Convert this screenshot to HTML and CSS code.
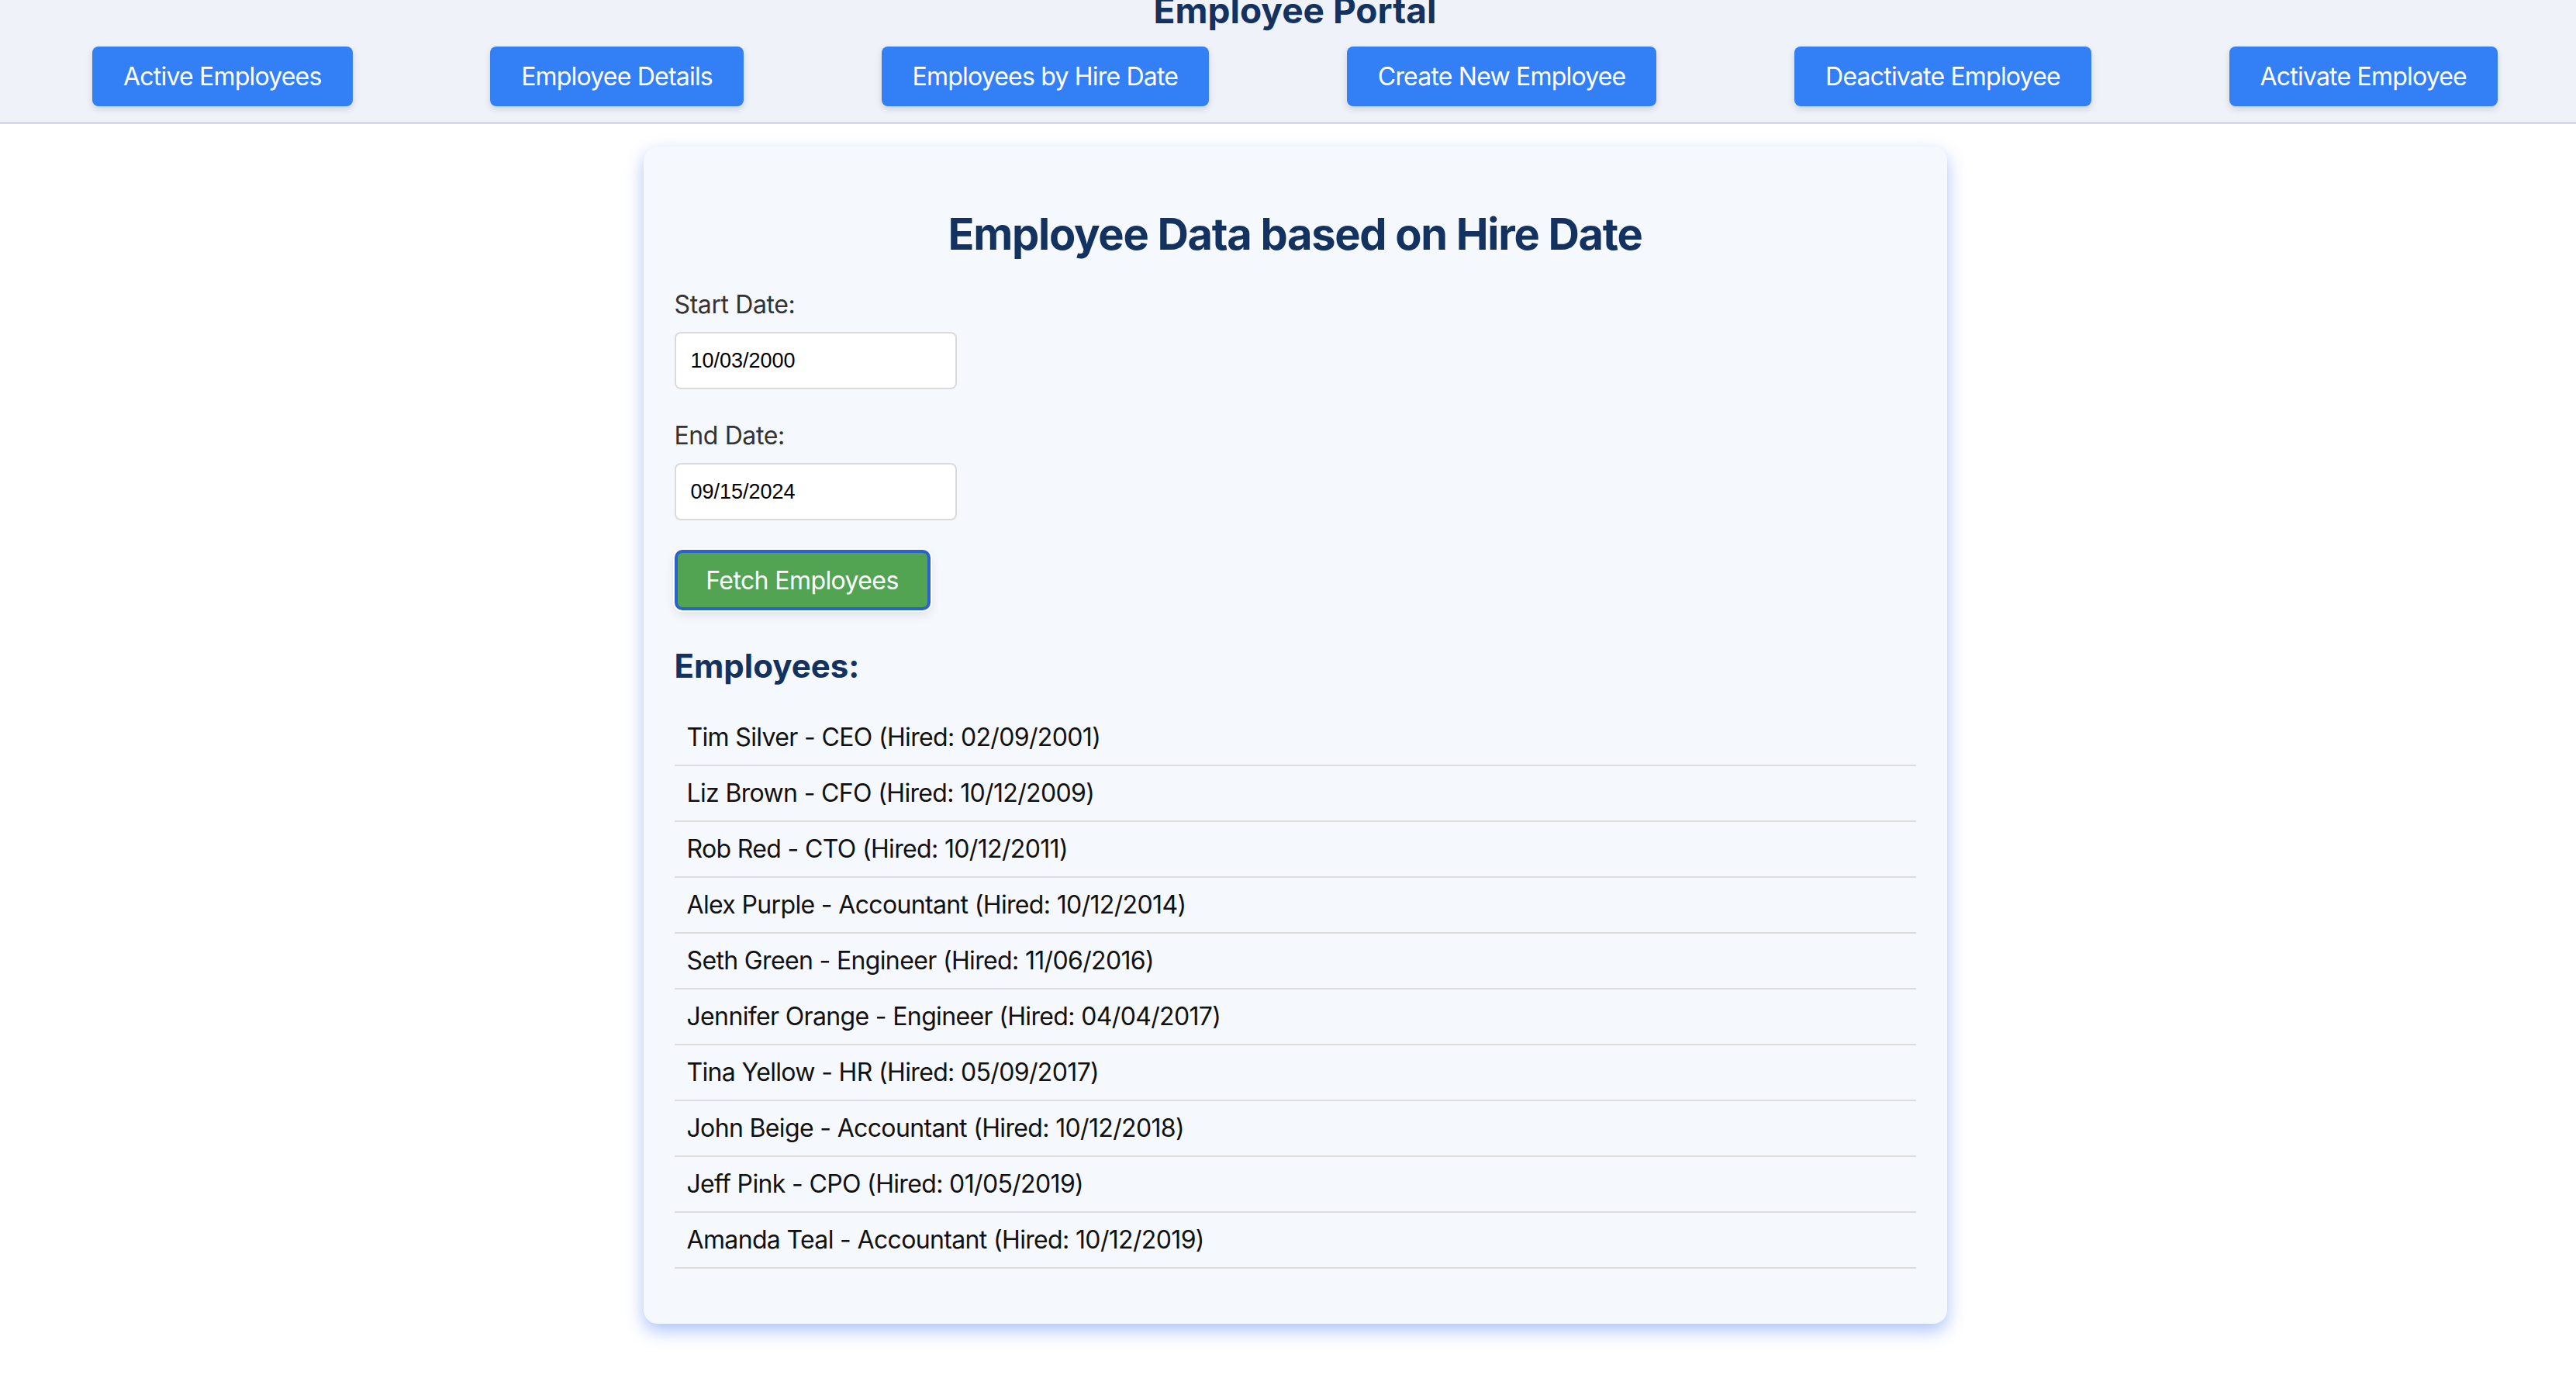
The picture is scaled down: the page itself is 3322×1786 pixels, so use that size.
FILE: index.html
```html
<!DOCTYPE html>
<html lang="en">
<head>
<meta charset="utf-8">
<title>Employee Portal</title>
<link rel="stylesheet" href="styles.css">
</head>
<body>
<header class="site-header">
  <h1 class="portal-title">Employee Portal</h1>
  <nav class="nav">
    <button class="nav-btn">Active Employees</button>
    <button class="nav-btn">Employee Details</button>
    <button class="nav-btn">Employees by Hire Date</button>
    <button class="nav-btn">Create New Employee</button>
    <button class="nav-btn">Deactivate Employee</button>
    <button class="nav-btn">Activate Employee</button>
  </nav>
</header>
<main class="main">
  <section class="card">
    <h2 class="card-title">Employee Data based on Hire Date</h2>
    <label class="field-label" for="start">Start Date:</label>
    <input class="date-input" id="start" type="text" value="10/03/2000">
    <label class="field-label" for="end">End Date:</label>
    <input class="date-input" id="end" type="text" value="09/15/2024">
    <button class="fetch-btn">Fetch Employees</button>
    <h3 class="list-title">Employees:</h3>
    <ul class="emp-list">
      <li class="emp-item">Tim Silver - CEO (Hired: 02/09/2001)</li>
      <li class="emp-item">Liz Brown - CFO (Hired: 10/12/2009)</li>
      <li class="emp-item">Rob Red - CTO (Hired: 10/12/2011)</li>
      <li class="emp-item">Alex Purple - Accountant (Hired: 10/12/2014)</li>
      <li class="emp-item">Seth Green - Engineer (Hired: 11/06/2016)</li>
      <li class="emp-item">Jennifer Orange - Engineer (Hired: 04/04/2017)</li>
      <li class="emp-item">Tina Yellow - HR (Hired: 05/09/2017)</li>
      <li class="emp-item">John Beige - Accountant (Hired: 10/12/2018)</li>
      <li class="emp-item">Jeff Pink - CPO (Hired: 01/05/2019)</li>
      <li class="emp-item">Amanda Teal - Accountant (Hired: 10/12/2019)</li>
    </ul>
  </section>
</main>
</body>
</html>
```
FILE: styles.css
```css
* { box-sizing: border-box; }

html, body {
  margin: 0;
  padding: 0;
  background: #ffffff;
  font-family: Inter, "Noto Sans", "Liberation Sans", sans-serif;
}

.site-header {
  background: #eff3f9;
  border-bottom: 3px solid #d6dae8;
  padding: 0 0 20px 18px;
  overflow: hidden;
}

.portal-title {
  margin: -15px 0 0;
  text-align: center;
  font-size: 46px;
  font-weight: 700;
  line-height: 56px;
  color: #13325f;
}

.nav {
  display: flex;
  justify-content: space-between;
  align-items: center;
  padding: 0 101px;
  margin-top: 19px;
}

.nav-btn {
  font-family: Inter, "Noto Sans", "Liberation Sans", sans-serif;
  font-size: 32px;
  line-height: 39px;
  letter-spacing: -0.8px;
  color: #ffffff;
  background: #3380f6;
  border: none;
  border-radius: 8px;
  padding: 19px 40px;
  box-shadow: 0 4px 10px rgba(0, 0, 0, 0.13);
}

.main {
  padding-left: 18px;
}

.card {
  width: 1681px;
  margin: 29px auto 60px;
  background: #f5f8fc;
  border-radius: 18px;
  padding: 40px 40px 40px;
  box-shadow: 0 9px 22px rgba(70, 120, 245, 0.45);
}

.card-title {
  margin: 39px 0 38px;
  text-align: center;
  font-size: 56px;
  line-height: 68px;
  font-weight: 700;
  letter-spacing: -1.3px;
  color: #13325f;
}

.field-label {
  display: block;
  font-size: 32px;
  line-height: 38px;
  letter-spacing: -0.4px;
  color: #333333;
  margin-bottom: 16px;
}

.date-input {
  display: block;
  width: 364px;
  height: 74px;
  padding: 0 19px;
  border: 2px solid #dadada;
  border-radius: 8px;
  background: #ffffff;
  font-family: "Liberation Sans", Arial, sans-serif;
  font-size: 27px;
  color: #000000;
  margin-bottom: 41px;
}

.fetch-btn {
  display: block;
  margin-top: -3px;
  width: 330px;
  height: 78px;
  padding: 0;
  font-family: Inter, "Noto Sans", "Liberation Sans", sans-serif;
  font-size: 32px;
  letter-spacing: -0.6px;
  color: #ffffff;
  background: #52a452;
  border: 4px solid #2962cf;
  border-radius: 10px;
  box-shadow: 0 0 0 2px #ffffff, 0 6px 14px rgba(0, 0, 0, 0.1);
}

.list-title {
  margin: 46px 0 32px;
  font-size: 42px;
  line-height: 51px;
  font-weight: 700;
  color: #13325f;
}

.emp-list {
  list-style: none;
  margin: 0 0 31px;
  padding: 0;
}

.emp-item {
  font-size: 32px;
  line-height: 38px;
  letter-spacing: -0.65px;
  color: #111111;
  padding: 16px 16px;
  border-bottom: 2px solid #dcdcdc;
}
```
